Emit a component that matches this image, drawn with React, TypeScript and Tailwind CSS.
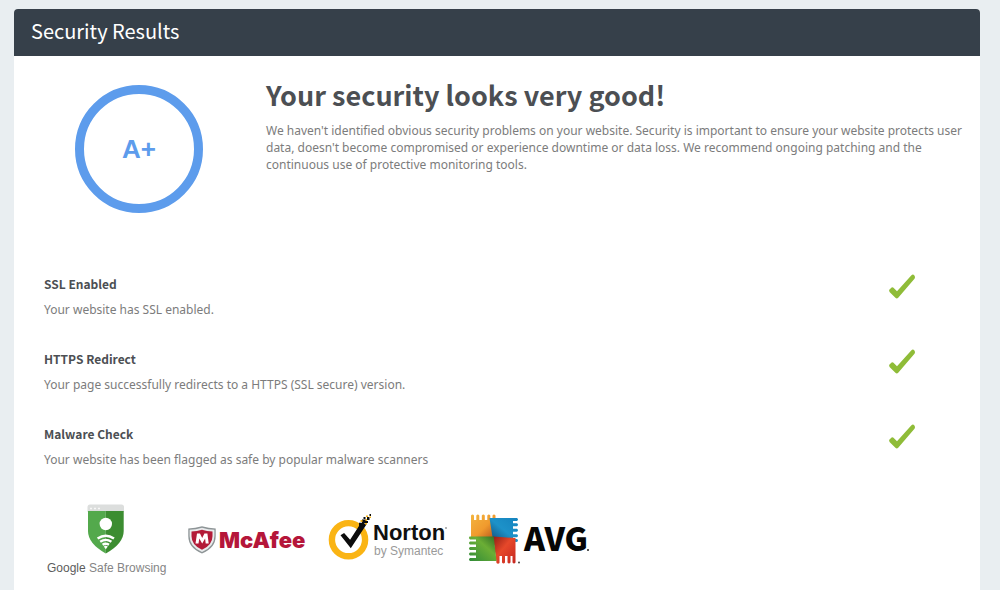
const checks = [
  { title: "SSL Enabled", description: "Your website has SSL enabled." },
  { title: "HTTPS Redirect", description: "Your page successfully redirects to a HTTPS (SSL secure) version." },
  { title: "Malware Check", description: "Your website has been flagged as safe by popular malware scanners" },
];

function CheckMark() {
  return (
    <svg className="w-[26px] h-[26px]" viewBox="0 0 26 26" role="img" aria-label="Passed">
      <path
        d="M.5 15.400 2.600 13.500Q3.600 12.800 4.500 13.800L8 17.200 22.200 1.600Q23.900-.2 25.200 1.300 26.600 3 25.500 4.700L9.200 23.800Q7.800 25.400 6.400 23.800L.8 18.200Q-.4 16.800.5 15.400Z"
        fill="#8fbc38"
      />
    </svg>
  );
}

function GoogleLogo() {
  return (
    <svg className="w-[120px] h-[76px] overflow-visible" viewBox="0 0 120 76">
      <path d="M43.500 10V5q0-2.500 2.500-2.500h31.500q2.500 0 2.500 2.500v5Z" fill="#dcdedd" />
      <path d="M46 6.500h2M50 6.500h2M54 6.500h2" stroke="#f8f8f8" strokeWidth="1.500" />
      <path d="M44 9h17.800v42.500Q44 41.500 44 29Z" fill="#53a94c" />
      <path d="M61.800 9h17.900v20q0 12.500-17.900 22.500Z" fill="#3c8d31" />
      <circle cx="61.800" cy="22" r="6.200" fill="#fff" />
      <g fill="none" stroke="#fff" strokeWidth="2.400">
        <path d="M53.600 36.500q8.200-5.600 16.400 0" />
        <path d="M56.200 39.800q5.600-3.800 11.200 0" />
        <path d="M58.600 42.800q3.200-2.200 6.400 0" />
      </g>
      <path d="m59.800 44.600 2 2.600 2-2.600q-2-1.600-4 0Z" fill="#fff" />
      <text x="3" y="70" fontSize="12" fill="#858585" fontFamily="'Liberation Sans', sans-serif">
        <tspan fill="#5c5c5c">Google</tspan> Safe Browsing
      </text>
    </svg>
  );
}

function McAfeeLogo() {
  return (
    <svg className="w-[120px] h-[76px] overflow-visible" viewBox="0 0 120 76">
      <path d="M3.300 26.500q7-.3 13.700-2.300 6.700 2 13.700 2.300v7.500q0 12-13.700 17.500Q3.300 46 3.300 34Z" fill="#8d9496" />
      <path d="M4.600 27.800q6.400-.2 12.400-2 6 1.800 12.400 2v6.200q0 10.800-12.400 16-12.400-5.200-12.400-16Z" fill="#e8ebec" />
      <path d="M6.500 29.400q5.600-.2 10.500-1.700 4.900 1.500 10.500 1.700v4.800q0 8.800-10.500 13.600Q6.500 43 6.500 34.200Z" fill="#b31b38" />
      <path d="M10.500 41.500 12 31.500h3l2.200 4.400 2.200-4.400h3l1.300 10h-3l-.6-5-2.900 5-2.900-5-.8 5Z" fill="#fff" />
      <text x="34" y="46" fontSize="22" fontWeight="900" fill="#b5163a" fontFamily="Inter, sans-serif">
        McAfee
      </text>
    </svg>
  );
}

function NortonLogo() {
  return (
    <svg className="w-[120px] h-[76px] overflow-visible" viewBox="0 0 120 76">
      <circle cx="22.500" cy="37.700" r="16.600" fill="none" stroke="#fab414" strokeWidth="6.400" />
      <path d="m14.500 33.200 3.600-2.200 6 6.800 10.500-16.300 6 .8-15.800 24Z" fill="#0c0c0c" />
      <path d="M33 20.800h5v4h-5ZM36 17.600h4v4h-4ZM40 19h2v2h-2ZM37.500 15h2v2h-2ZM41 15h2.500v3H41ZM43.500 12h1.500v2h-1.500Z" fill="#0c0c0c" />
      <path d="M34.500 18h2v2h-2ZM39.500 17h1.500v2h-1.500ZM39 21h2v1.500h-2ZM40 13.500h2V15h-2ZM43.500 14.500h1.500V16h-1.500Z" fill="#fab414" />
      <text x="47" y="38" fontSize="22" fontWeight="700" fill="#101010" fontFamily="'Liberation Sans', sans-serif">
        Norton
      </text>
      <text x="48" y="53" fontSize="12" fill="#9a9a9a" fontFamily="'Liberation Sans', sans-serif">
        by Symantec
      </text>
      <circle cx="120" cy="26" r=".7" fill="#333" />
    </svg>
  );
}

function AvgLogo() {
  return (
    <svg className="w-[120px] h-[76px] overflow-visible" viewBox="0 0 120 76">
      <defs>
        <linearGradient id="avg-orange" x1="0" y1="0" x2="1" y2="1">
          <stop offset="0" stopColor="#f3b53f" />
          <stop offset=".55" stopColor="#f09a2d" />
          <stop offset="1" stopColor="#b4541c" />
        </linearGradient>
        <linearGradient id="avg-blue" x1="1" y1="0" x2="0" y2="1">
          <stop offset="0" stopColor="#1583be" />
          <stop offset=".5" stopColor="#1d92c9" />
          <stop offset="1" stopColor="#12466f" />
        </linearGradient>
        <linearGradient id="avg-green" x1="0" y1="1" x2="1" y2="0">
          <stop offset="0" stopColor="#2f8a38" />
          <stop offset=".6" stopColor="#6bae35" />
          <stop offset="1" stopColor="#2d6a24" />
        </linearGradient>
        <linearGradient id="avg-red" x1="0" y1="0" x2="1" y2="1">
          <stop offset="0" stopColor="#8f1d14" />
          <stop offset=".45" stopColor="#e6482a" />
          <stop offset="1" stopColor="#c52620" />
        </linearGradient>
      </defs>
      <path
        d="M4 36V13.500q1.500-2 3 0v4.500h2.300v-4.500q1.500-2 3 0v4.500h2.500v-4.500q1.500-2 3 0v4.500h2.500v-4.500q1.500-2 3 0v4.500h2.200v-4.500q1.500-2 3 0V36Z"
        fill="url(#avg-orange)"
      />
      <path
        d="M22.500 16H50q2 1.500 0 3h-4v2.300h4q2 1.500 0 3h-4v2.500h4q2 1.500 0 3h-4v2.500h4q2 1.500 0 3h-4v1.700h4q2 1.500 0 3l-24-1.800Z"
        fill="url(#avg-blue)"
      />
      <path
        d="M26 34.500l22.500 1.500v24.500q-1.500 2-3 0V54h-2v6.500q-1.500 2-3 0V54H38v6.500q-1.500 2-3 0V54h-2.500v7q-1.500 1.500-3 0Z"
        fill="url(#avg-red)"
      />
      <path
        d="M2.500 34.500h24.200L29.500 59H3q-2-1.500 0-3h6v-2.500H3q-2-1.500 0-3h6V48H3q-2-1.500 0-3h6v-2.500H3q-2-1.500 0-3h6v-2H3q-2-1.500-.5-3Z"
        fill="url(#avg-green)"
      />
      <circle cx="52" cy="60.500" r=".9" fill="#333" />
      <text x="57" y="49" fontSize="32" fontWeight="900" fill="#060606" fontFamily="'Noto Sans CJK SC', sans-serif">
        AVG
      </text>
      <circle cx="121" cy="48" r="1" fill="#222" />
    </svg>
  );
}

export default function App() {
  return (
    <div className="min-h-screen flex flex-col bg-[#e9eef1] pt-[9px] pl-[14px] pr-5 font-['Noto_Sans',sans-serif]">
      <main className="flex-1 bg-white rounded-t-sm overflow-hidden">
        <header className="bg-[#36404a] px-[17px] pt-[7px] pb-[10px]">
          <h1 className="text-[20px] leading-[30px] text-white font-['Noto_Sans_CJK_SC',sans-serif]">
            Security Results
          </h1>
        </header>

        <div className="px-[30px] pb-3">
          {/* Grade summary */}
          <section className="flex gap-8 pt-[23px] -mr-5">
            <div className="w-[190px] pt-[6px] shrink-0 flex justify-center">
              <div className="size-32 rounded-full border-[9px] border-[#5d9cec] flex items-center justify-center text-[26px] leading-8 font-bold text-[#5d9cec] font-['Liberation_Sans',sans-serif]">
                A+
              </div>
            </div>
            <div className="flex-1">
              <h2 className="text-[27px] leading-8 font-bold text-[#4c4f53] font-['Noto_Sans_CJK_SC',sans-serif]">
                Your security looks very good!
              </h2>
              <p className="pt-[11px] text-[12px] leading-[17px] text-[#7c7c7c]">
                We haven't identified obvious security problems on your website. Security is important to ensure your
                website protects user data, doesn't become compromised or experience downtime or data loss. We recommend
                ongoing patching and the continuous use of protective monitoring tools.
              </p>
            </div>
          </section>

          {/* Individual checks */}
          <ul className="pt-[61px]">
            {checks.map((check) => (
              <li key={check.title} className="h-[75px] flex items-start justify-between">
                <div>
                  <h3 className="text-[12px] leading-5 font-bold text-[#4c4f53] font-['Noto_Sans_CJK_SC',sans-serif]">
                    {check.title}
                  </h3>
                  <p className="pt-[6px] text-[12px] leading-5 text-[#7c7c7c]">{check.description}</p>
                </div>
                <div className="w-24 flex justify-center">
                  <CheckMark />
                </div>
              </li>
            ))}
          </ul>

          {/* Malware scanners */}
          <div className="flex gap-[21px] pt-[3px]">
            <GoogleLogo />
            <McAfeeLogo />
            <NortonLogo />
            <AvgLogo />
          </div>
        </div>
      </main>
    </div>
  );
}
